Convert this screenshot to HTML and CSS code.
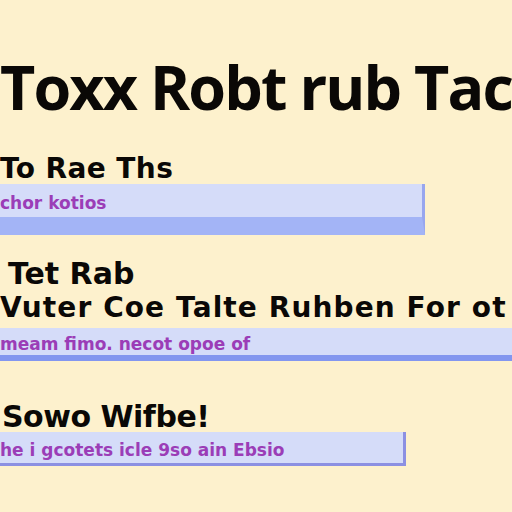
FILE: index.html
```html
<!DOCTYPE html>
<html>
<head>
<meta charset="utf-8">
<link rel="stylesheet" href="styles.css">
</head>
<body>
<main class="page">
  <h1 class="title">Toxx Robt rub Tac</h1>

  <section class="block block-one">
    <h2 class="heading">To Rae Ths</h2>
    <div class="bar bar-one"><span class="bar-text">chor kotios</span></div>
  </section>

  <section class="block block-two">
    <h2 class="heading heading-two">Tet Rab</h2>
    <h3 class="subheading">Vuter Coe Talte Ruhben For ot</h3>
    <div class="bar bar-two"><span class="bar-text">meam fimo. necot opoe of</span></div>
  </section>

  <section class="block block-three">
    <h2 class="heading heading-three">Sowo Wifbe!</h2>
    <div class="bar bar-three"><span class="bar-text">he i gcotets icle 9so ain Ebsio</span></div>
  </section>
</main>
</body>
</html>
```

FILE: styles.css
```css
html, body {
  margin: 0;
  padding: 0;
  background: #fdf1cd;
}

.page {
  width: 512px;
  height: 512px;
  overflow: hidden;
  font-family: "DejaVu Sans", "Noto Sans", sans-serif;
  color: #0a0806;
}

.title {
  margin: 0;
  padding-top: 55px;
  font-family: "Open Sans", "Noto Sans", sans-serif;
  font-size: 61px;
  line-height: 64px;
  font-weight: 700;
  letter-spacing: -1.9px;
  white-space: nowrap;
}

.block {
  display: flex;
  flex-direction: column;
}

.heading {
  margin: 0;
  font-size: 28px;
  line-height: 30px;
  font-weight: 700;
  letter-spacing: 0.4px;
  white-space: nowrap;
}

.subheading {
  margin: 3px 0 0;
  font-size: 28px;
  line-height: 30px;
  font-weight: 700;
  letter-spacing: 1.1px;
  white-space: nowrap;
}

.bar {
  box-sizing: border-box;
  background: #d5dcf9;
  display: flex;
  align-items: center;
  padding-top: 5px;
}

.bar-text {
  font-size: 17px;
  font-weight: 700;
  color: #9b3db7;
  white-space: nowrap;
}

.block-one {
  margin-top: 35px;
}

.bar-one {
  width: 425px;
  height: 51px;
  border-bottom: 18px solid #a3b4f6;
  border-right: 3px solid #98a6ee;
}

.block-two {
  margin-top: 23px;
}

.heading-two {
  padding-left: 8px;
  font-size: 30px;
  line-height: 32px;
  letter-spacing: 0;
}

.bar-two {
  margin-top: 5px;
  width: 512px;
  height: 33px;
  border-bottom: 6px solid #8396ef;
}

.block-three {
  margin-top: 40px;
}

.heading-three {
  font-size: 30px;
  line-height: 31px;
  letter-spacing: -0.5px;
  padding-left: 2px;
}

.bar-three {
  width: 406px;
  height: 34px;
  border-bottom: 3px solid #8c90e2;
  border-right: 3px solid #8c90e2;
}
```
